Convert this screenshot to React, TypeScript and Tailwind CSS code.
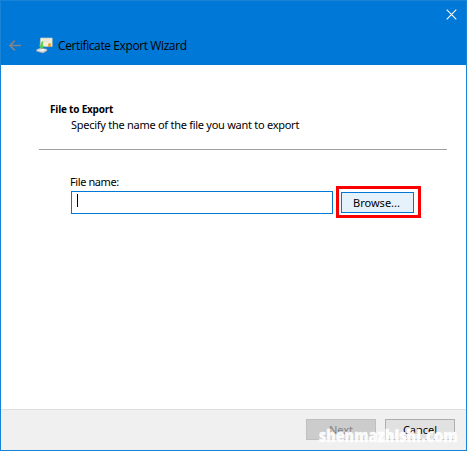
import { useState } from 'react';

function WizardIcon() {
  return (
    <svg className="w-[17px] h-[17px] shrink-0" viewBox="0 0 17 17">
      <path d="M4.5 1h11.7v8.6H4.2z" fill="#f3efd9" stroke="#c5c5b4" strokeWidth=".7" />
      <path d="M8 3h6M8 4.6h5" stroke="#dcdcd4" strokeWidth=".7" />
      <path d="M12.8 7.5l-.8 2.4 1.6-.6 1.4.6-.7-2.4z" fill="#c9822a" />
      <circle cx="13.5" cy="7.4" r="1.3" fill="#e8a526" />
      <path d="M.5 12.8l4-1.8 6.5 1.2v1.5L7 16 .6 14.2z" fill="#d5d9dc" stroke="#9aa1a7" strokeWidth=".5" />
      <path d="M3 13l3-1.2 3.3.7L6.5 14z" fill="#f8f8f8" />
      <path d="M7.2 4C5.6 4.8 4.8 6.2 4.8 8.4H3.2l2.2 3.8 2.7-2.9H6.8c-.1-1.9.1-3.6.4-5.3z" fill="#55d14c" stroke="#3fc13f" strokeWidth=".3" />
    </svg>
  );
}

export default function CertificateExportWizard() {
  const [fileName, setFileName] = useState('');

  return (
    <div className="w-[467px] h-[451px] flex flex-col overflow-hidden border border-[#1883d7] bg-white text-black text-[11px] leading-[14px] font-['Noto_Sans',sans-serif]">
      {/* Title bar */}
      <header className="h-16 shrink-0 bg-[#0078d7]">
        <div className="h-7 flex justify-end pr-[9px] pt-[8px]">
          <button aria-label="Close" className="w-[11px] h-[11px]">
            <svg className="w-[11px] h-[11px]" viewBox="0 0 11 11">
              <path d="M.7.7l9.6 9.6M10.3.7L.7 10.3" stroke="#fff" strokeWidth="1.1" />
            </svg>
          </button>
        </div>
        <div className="h-8 flex items-center pl-[8px]">
          <svg className="w-3 h-[11px] shrink-0" viewBox="0 0 12 11" fill="none">
            <path d="M12 5.5H1M5.8.7L1 5.5l4.8 4.8" stroke="#848484" strokeWidth="1.7" />
          </svg>
          <div className="ml-[15px]"><WizardIcon /></div>
          <h1 className="ml-[5px] mt-[2px] font-['Open_Sans',sans-serif] text-[12px] leading-4 tracking-[-0.4px] whitespace-nowrap">
            Certificate Export Wizard
          </h1>
        </div>
      </header>

      {/* Page content */}
      <main className="flex-1 pl-[38px] pr-[19px] pt-[37px]">
        <div className="h-[48px] border-b border-[#a0a0a0] pl-[11px]">
          <h2 className="font-['Open_Sans',sans-serif] text-[10px] font-bold leading-[14px] tracking-[-0.2px]">File to Export</h2>
          <p className="pl-[21px] mt-[2px] tracking-[-0.27px] whitespace-nowrap">Specify the name of the file you want to export</p>
        </div>
        <div className="pl-8 pt-[25px]">
          <label htmlFor="file-name" className="block h-[11px] -ml-px tracking-[-0.4px]">File name:</label>
          <div className="flex">
            <div className="mt-[5px] w-[262px] h-[23px] border border-[#0078d7] flex items-start pl-[5px] pt-[2px]">
              <span className="w-px h-[13px] bg-black shrink-0"></span>
              <input
                id="file-name"
                value={fileName}
                onChange={(e) => setFileName(e.target.value)}
                className="w-[245px] h-[15px] outline-none"
              />
            </div>
            {/* Highlighted action */}
            <div className="ml-[3px] w-[85px] h-8 border-[3px] border-[#fa0000] pl-[2px] pt-[3px]">
              <button className="w-[73px] h-[21px] border border-[#0078d7] bg-[#e5f1fb] flex items-center justify-center pr-[2px]">
                Browse...
              </button>
            </div>
          </div>
        </div>
      </main>

      <footer className="relative h-[41px] shrink-0 border-t border-[#dfdfdf] bg-[#f0f0f0] flex gap-[9px] pl-[305px] pt-[9px]">
        <button className="w-[70px] h-[21px] border border-[#bfbfbf] bg-[#cccccc] text-[#838383] flex items-center justify-center">Next</button>
        <button className="w-[70px] h-[21px] border border-[#adadad] bg-[#e1e1e1] flex items-center justify-center">Cancel</button>
        <span className="absolute left-[318px] top-[15px] font-['Open_Sans',sans-serif] [font-stretch:condensed] [-webkit-text-stroke:0.4px_#ffffffe6] text-[18px] leading-[20px] font-extrabold tracking-[0.1px] text-white/90 whitespace-nowrap pointer-events-none">
          shenmazhishi.com
        </span>
      </footer>
    </div>
  );
}
